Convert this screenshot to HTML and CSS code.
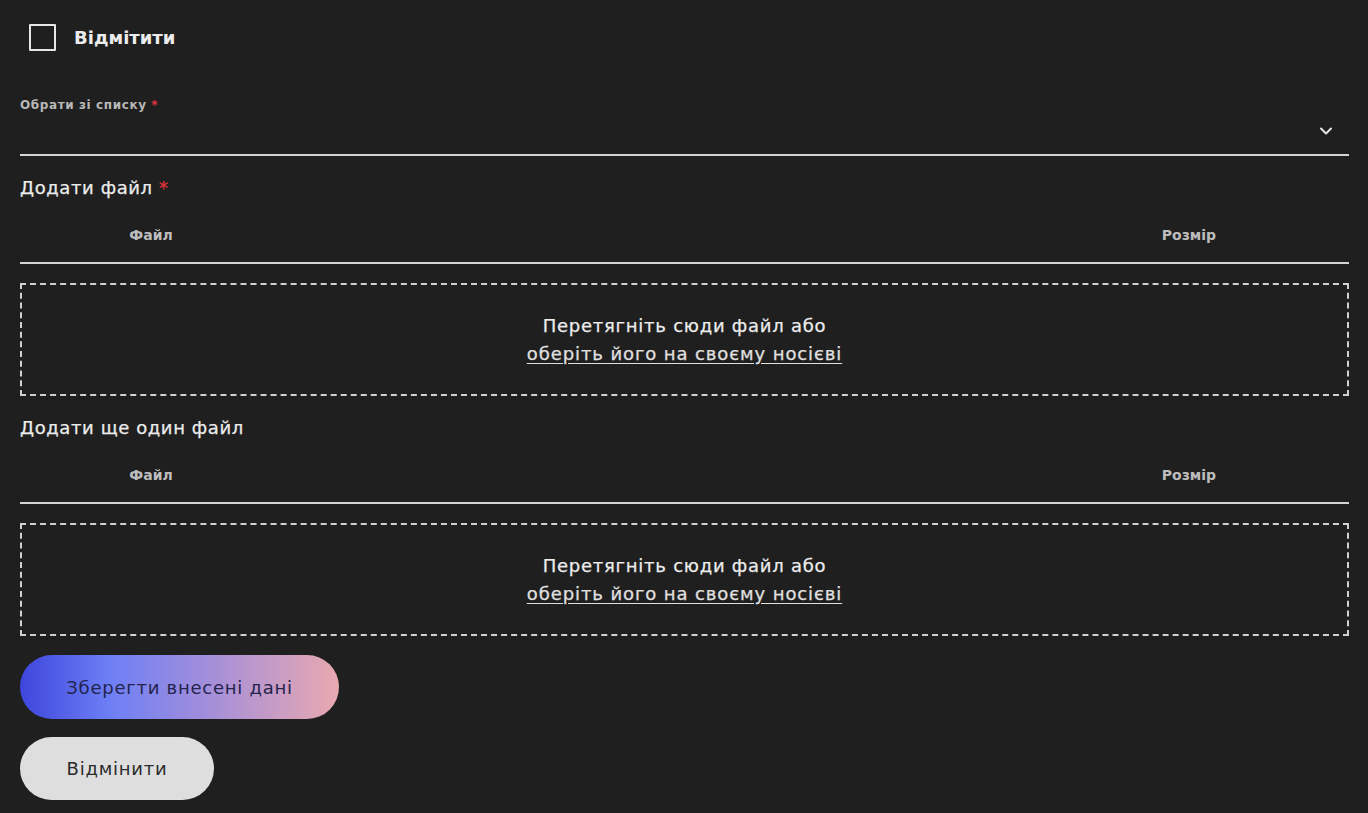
FILE: index.html
```html
<!DOCTYPE html>
<html lang="uk">
<head>
<meta charset="utf-8">
<link rel="stylesheet" href="styles.css">
</head>
<body>
<main class="form">
  <label class="check">
    <span class="check-box"></span>
    <span class="check-label">Відмітити</span>
  </label>

  <div class="select">
    <div class="select-label">Обрати зі списку <span class="req">*</span></div>
    <div class="select-row">
      <svg class="chev" width="14" height="10" viewBox="0 0 14 10"><path d="M2 2.5 L7 7.5 L12 2.5" fill="none" stroke="#e6e6e6" stroke-width="2" stroke-linecap="round" stroke-linejoin="round"/></svg>
    </div>
  </div>

  <section class="files">
    <h2 class="files-title">Додати файл <span class="req">*</span></h2>
    <div class="files-head">
      <span class="col-file">Файл</span>
      <span class="col-size">Розмір</span>
    </div>
    <div class="drop">
      <p>Перетягніть сюди файл або</p>
      <a class="drop-link">оберіть його на своєму носієві</a>
    </div>
  </section>

  <section class="files">
    <h2 class="files-title">Додати ще один файл</h2>
    <div class="files-head">
      <span class="col-file">Файл</span>
      <span class="col-size">Розмір</span>
    </div>
    <div class="drop">
      <p>Перетягніть сюди файл або</p>
      <a class="drop-link">оберіть його на своєму носієві</a>
    </div>
  </section>

  <div class="actions">
    <button class="btn btn-primary">Зберегти внесені дані</button>
    <button class="btn btn-secondary">Відмінити</button>
  </div>
</main>
</body>
</html>
```
FILE: styles.css
```css
html, body {
  margin: 0;
  padding: 0;
  background: #1f1f1f;
}
body {
  font-family: "DejaVu Sans", "Noto Sans", "Liberation Sans", sans-serif;
  color: #e8e8e8;
}
.form {
  padding: 0 19px 0 20px;
  display: flex;
  flex-direction: column;
}
.check {
  display: flex;
  align-items: center;
  gap: 18px;
  padding: 24px 0 0 9px;
  height: 27px;
}
.check-box {
  width: 23px;
  height: 23px;
  border: 2px solid #e6e6e6;
  border-radius: 1px;
}
.check-label {
  font-size: 18px;
  font-weight: 700;
  color: #ececec;
}
.select {
  margin-top: 46px;
}
.select-label {
  font-size: 12px;
  font-weight: 700;
  letter-spacing: 0.6px;
  color: #b8b8b8;
  line-height: 16px;
}
.req {
  color: #e0343c;
}
.select-row {
  border-bottom: 2px solid #d4d4d4;
  display: flex;
  justify-content: flex-end;
  align-items: flex-start;
  padding: 13px 16px 0 0;
  height: 28px;
}
.files-title {
  margin: 21px 0 0;
  font-size: 18px;
  font-weight: 400;
  letter-spacing: 0.6px;
  line-height: 22px;
  color: #ececec;
  -webkit-text-stroke-width: 0.25px;
}
.files-head {
  display: flex;
  justify-content: space-between;
  height: 65px;
  border-bottom: 2px solid #d4d4d4;
  box-sizing: border-box;
  align-items: flex-start;
  padding-top: 28px;
  font-size: 14px;
  line-height: 17px;
  font-weight: 700;
  color: #bdbdbd;
}
.col-file {
  width: 262px;
  text-align: center;
}
.col-size {
  width: 320px;
  text-align: center;
}
.drop {
  margin-top: 19px;
  height: 113px;
  box-sizing: border-box;
  border: 2px dashed #d0d0d0;
  display: flex;
  flex-direction: column;
  align-items: center;
  justify-content: center;
  font-size: 18px;
  letter-spacing: 0.75px;
  line-height: 28px;
  color: #ececec;
  -webkit-text-stroke-width: 0.25px;
}
.drop p {
  margin: 0;
}
.drop-link {
  color: #e0e0e0;
  letter-spacing: 0.9px;
  text-decoration: underline;
  text-underline-offset: 3px;
}
.actions {
  margin-top: 19px;
  display: flex;
  flex-direction: column;
  align-items: flex-start;
  gap: 18px;
}
.btn {
  border: none;
  border-radius: 32px;
  height: 64px;
  font-family: inherit;
  font-size: 18px;
  font-weight: 400;
  letter-spacing: 0.75px;
  padding: 0;
}
.btn-primary {
  width: 319px;
  background: linear-gradient(90deg, #3d46dc 0%, #6d7ff5 28%, #a58fd9 60%, #e9a9b0 100%);
  color: #24244e;
}
.btn-secondary {
  width: 194px;
  height: 63px;
  background: #dedede;
  color: #2b2b2b;
}
```
